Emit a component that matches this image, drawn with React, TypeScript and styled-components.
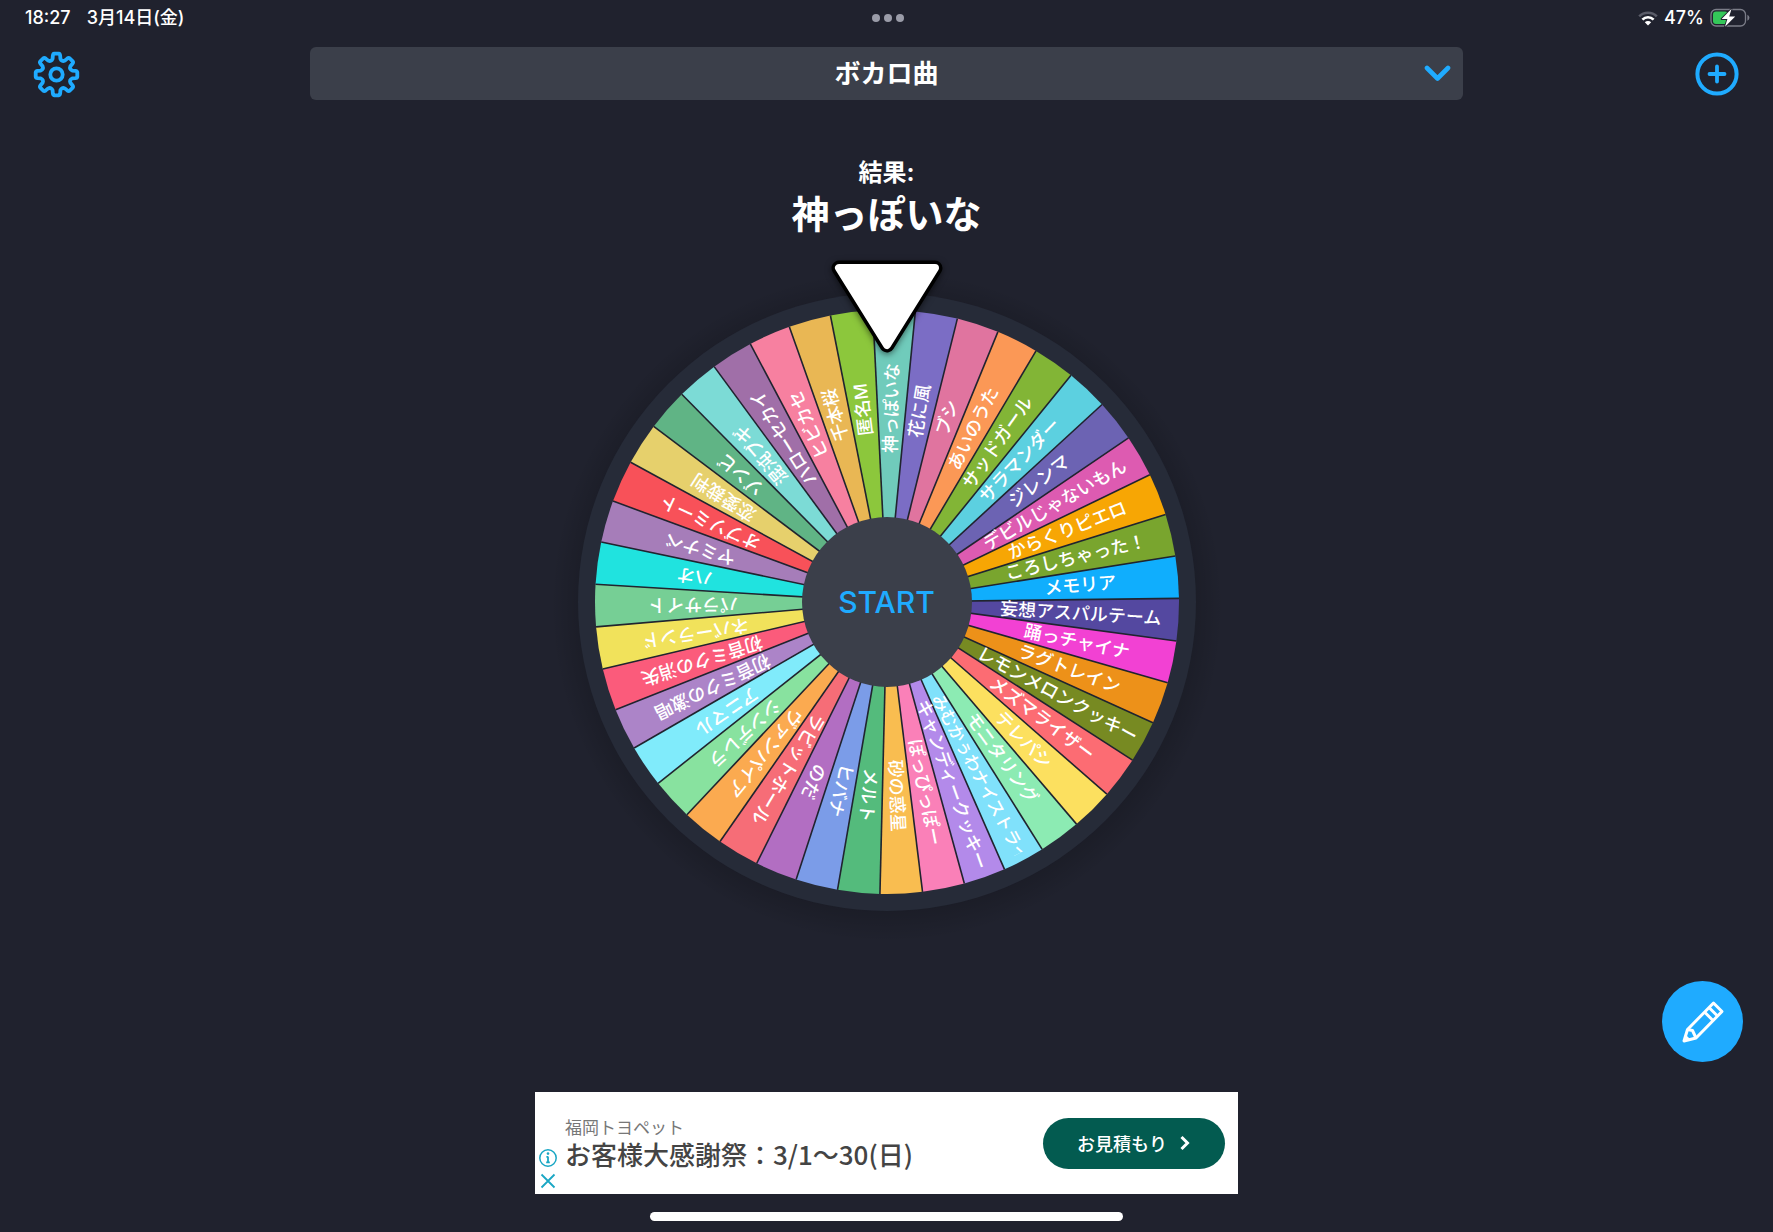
import React, { useState } from 'react';
import styled, { createGlobalStyle } from 'styled-components';

const ACCENT = '#1fabff';
const FONT = `Inter, "Noto Sans CJK JP", sans-serif`;

const GlobalStyle = createGlobalStyle`
  *, *::before, *::after { box-sizing: border-box; }
  body {
    margin: 0;
    background: #20222e;
    color: #fff;
    font-family: ${FONT};
  }
  button, select { font-family: inherit; }
`;

const Screen = styled.div`
  display: flex;
  flex-direction: column;
  min-height: 100vh;
  overflow: hidden;
`;

const StatusBar = styled.header`
  display: grid;
  grid-template-columns: 1fr auto 1fr;
  align-items: center;
  height: 36px;
  padding: 0 23px 0 25px;
  font-size: 18px;
  font-weight: 500;
  line-height: 20px;
`;

const StatusGroup = styled.div<{ $end?: boolean; $gap: number }>`
  display: flex;
  align-items: center;
  justify-content: ${(p) => (p.$end ? 'flex-end' : 'flex-start')};
  gap: ${(p) => p.$gap}px;
`;

const Dots = styled.div`
  display: flex;
  gap: 4px;
`;

const Dot = styled.span`
  width: 8px;
  height: 8px;
  border-radius: 50%;
  background: #9a9ca8;
`;

const TopBar = styled.nav`
  display: grid;
  grid-template-columns: 1fr 65% 1fr;
  align-items: center;
  margin-top: 11px;
`;

const IconButton = styled.button<{ $end?: boolean }>`
  display: flex;
  justify-self: ${(p) => (p.$end ? 'end' : 'start')};
  margin: 0 32px;
  padding: 0;
  border: 0;
  background: none;
  color: ${ACCENT};
  cursor: pointer;
`;

const ListPicker = styled.div`
  position: relative;
  display: flex;
`;

const ListSelect = styled.select`
  width: 100%;
  height: 53px;
  padding: 0 40px;
  border: 0;
  border-radius: 6px;
  appearance: none;
  background: #3b3f4a;
  color: #fff;
  font-size: 26px;
  font-weight: 700;
  text-align: center;
  text-align-last: center;
`;

const PickerArrow = styled.svg`
  position: absolute;
  top: 18px;
  right: 12px;
  pointer-events: none;
`;

const Result = styled.section`
  display: flex;
  flex-direction: column;
  align-items: center;
  margin-top: 56px;
  text-align: center;
`;

const ResultLabel = styled.p`
  margin: 0;
  font-size: 24px;
  font-weight: 700;
  line-height: 33px;
`;

const ResultValue = styled.h1`
  margin: 0;
  font-size: 38px;
  font-weight: 700;
  line-height: 50px;
`;

const WheelArea = styled.main`
  display: grid;
  justify-items: center;
  align-items: center;
  margin-top: 15px;

  > * { grid-area: 1 / 1; }
`;

const StartButton = styled.button`
  width: 170px;
  height: 170px;
  padding: 0;
  border: 0;
  border-radius: 50%;
  background: #3b3f4a;
  color: ${ACCENT};
  font-size: 30px;
  font-weight: 500;
  cursor: pointer;
`;

const Pointer = styled.svg`
  align-self: start;
  filter: drop-shadow(0 2px 3px rgba(0, 0, 0, 0.5));
`;

const SliceLabel = styled.text<{ $size: number }>`
  fill: #fff;
  font-family: ${FONT};
  font-size: ${(p) => p.$size}px;
  font-weight: 500;
`;

const EditButton = styled.button`
  position: fixed;
  right: 30px;
  bottom: 170px;
  display: flex;
  align-items: center;
  justify-content: center;
  width: 81px;
  height: 81px;
  padding: 0;
  border: 0;
  border-radius: 50%;
  background: ${ACCENT};
  color: #fff;
  cursor: pointer;
`;

const Bottom = styled.footer`
  display: flex;
  flex-direction: column;
  align-items: center;
  gap: 18px;
  margin-top: auto;
  padding-bottom: 11px;
`;

const AdBanner = styled.aside`
  display: flex;
  align-items: center;
  width: 703px;
  max-width: 100%;
  height: 102px;
  padding: 0 13px 0 3px;
  background: #fff;
`;

const AdMarks = styled.div`
  display: flex;
  flex-direction: column;
  align-self: flex-end;
  align-items: center;
  gap: 4px;
  width: 20px;
  margin-right: 7px;
  padding-bottom: 4px;
`;

const MarkButton = styled.button`
  display: flex;
  padding: 0;
  border: 0;
  background: none;
  color: #1aa7c4;
  cursor: pointer;
`;

const AdCopy = styled.div`
  flex: 1;
  min-width: 0;
  padding-bottom: 2px;
`;

const Advertiser = styled.p`
  margin: 0;
  color: #777;
  font-family: "Noto Sans CJK JP", sans-serif;
  font-size: 17px;
  line-height: 24px;
`;

const AdTitle = styled.p`
  margin: 0;
  color: #444;
  font-family: "Noto Sans CJK JP", sans-serif;
  font-size: 26px;
  font-weight: 500;
  line-height: 30px;
`;

const AdLink = styled.a`
  display: flex;
  align-items: center;
  justify-content: center;
  gap: 12px;
  width: 182px;
  height: 51px;
  border-radius: 26px;
  background: #035b50;
  color: #fff;
  font-family: "Noto Sans CJK JP", sans-serif;
  font-size: 18px;
  font-weight: 500;
  line-height: 26px;
  text-decoration: none;
`;

const HomeIndicator = styled.div`
  width: 473px;
  max-width: 60%;
  height: 9px;
  border-radius: 5px;
  background: #fff;
`;

const SLICES: [string, string][] = [
  ['神っぽいな', '#70cbbb'],
  ['花に風', '#7b6dc5'],
  ['ブシ', '#e0749f'],
  ['あいのうた', '#fb9856'],
  ['サッドガール', '#82b536'],
  ['サラマンダー', '#5cd0e0'],
  ['ジレンマ', '#6c63b3'],
  ['デビルじゃないもん', '#dd5bb1'],
  ['からくりピエロ', '#f7a604'],
  ['ころしちゃった！', '#79a52e'],
  ['メモリア', '#10aefd'],
  ['妄想アスパルテーム', '#5448a0'],
  ['踊っチャイナ', '#f241d3'],
  ['ラグトレイン', '#ed9119'],
  ['レモンメロンクッキー', '#778a22'],
  ['メズマライザー', '#fc6c73'],
  ['テレパシ', '#fce05f'],
  ['モニタリング', '#8cebb3'],
  ['みむかぅわナイストライ', '#80e1fb'],
  ['キャンディークッキー', '#b38aea'],
  ['ぽっぴっぽー', '#fa80b8'],
  ['砂の惑星', '#f9bd50'],
  ['メルト', '#54bb7c'],
  ['ヒバナ', '#7b9ce8'],
  ['のだ', '#b26ec2'],
  ['ラビットホール', '#f66d77'],
  ['ヴァンパイア', '#fbaa50'],
  ['シンデレラ', '#88e29f'],
  ['アニマル', '#80ebfb'],
  ['初音ミクの激唱', '#ac84c8'],
  ['初音ミクの消失', '#fb5b7b'],
  ['ネバーランド', '#f1e25b'],
  ['パラサイト', '#76cf95'],
  ['ハオ', '#20e3df'],
  ['ヤミナベ', '#a67db9'],
  ['オブソミート', '#f85159'],
  ['恋愛裁判', '#e6d06c'],
  ['ゾンビ', '#60b485'],
  ['混沌ブギ', '#7cdbd6'],
  ['ハローセカイ', '#a06fa8'],
  ['ヒビカセ', '#f780a0'],
  ['千本桜', '#e9b754'],
  ['匿名M', '#8cc73c'],
];

const SIZE = 696;
const C = SIZE / 2;
const R_SLICE = 292;
const R_RIM = 309;
const R_LABEL = 194;
const STEP = 360 / SLICES.length;
const START_ANGLE = -2.8;

const point = (deg: number, r: number) => {
  const a = ((deg - 90) * Math.PI) / 180;
  return `${(C + r * Math.cos(a)).toFixed(2)} ${(C + r * Math.sin(a)).toFixed(2)}`;
};

function Wheel() {
  return (
    <svg width={SIZE} height={SIZE} viewBox={`0 0 ${SIZE} ${SIZE}`} role="img" aria-label="ルーレット">
      <defs>
        <radialGradient id="halo">
          <stop offset="0.9" stopColor="#000" stopOpacity="0.16" />
          <stop offset="1" stopColor="#000" stopOpacity="0" />
        </radialGradient>
        <clipPath id="labelArea">
          <rect x="0" y="-20" width="284" height="40" />
        </clipPath>
      </defs>
      <circle cx={C} cy={C + 4} r="336" fill="url(#halo)" />
      <circle cx={C} cy={C} r={R_RIM} fill="#262b38" />
      {SLICES.map(([name, color], i) => {
        const a = START_ANGLE + i * STEP;
        return (
          <path
            key={name}
            d={`M${C} ${C}L${point(a, R_SLICE)}A${R_SLICE} ${R_SLICE} 0 0 1 ${point(a + STEP, R_SLICE)}Z`}
            fill={color}
          />
        );
      })}
      {SLICES.map(([name], i) => (
        <path key={name} d={`M${C} ${C}L${point(START_ANGLE + i * STEP, R_SLICE)}`} stroke="#20242f" strokeWidth="1.6" />
      ))}
      {SLICES.map(([name], i) => {
        const long = name.length > 10;
        return (
          <g
            key={name}
            transform={`translate(${C} ${C}) rotate(${START_ANGLE + (i + 0.5) * STEP - 90})`}
            clipPath="url(#labelArea)"
          >
            <SliceLabel $size={long ? 17 : 18} x={long ? 106 : R_LABEL} y="6" textAnchor={long ? 'start' : 'middle'}>
              {name}
            </SliceLabel>
          </g>
        );
      })}
    </svg>
  );
}

function GearIcon() {
  const parts: string[] = [];
  const p = (deg: number, r: number) => {
    const a = (deg * Math.PI) / 180;
    return `${(24.5 + r * Math.sin(a)).toFixed(2)} ${(24.5 - r * Math.cos(a)).toFixed(2)}`;
  };
  for (let i = 0; i < 8; i++) {
    const a = i * 45;
    parts.push(
      `${i ? 'L' : 'M'}${p(a - 14, 16.2)}L${p(a - 11, 19.2)}Q${p(a - 9.5, 20.9)} ${p(a - 6, 20.9)}L${p(a + 6, 20.9)}Q${p(a + 9.5, 20.9)} ${p(a + 11, 19.2)}L${p(a + 14, 16.2)}Q${p(a + 22.5, 13.6)} ${p(a + 31, 16.2)}`,
    );
  }
  return (
    <svg width="48" height="48" viewBox="0 0 48 48" fill="none" stroke="currentColor" strokeWidth="3.8" strokeLinejoin="round" aria-hidden="true">
      <path d={`${parts.join('')}Z`} />
      <circle cx="24.5" cy="24.5" r="6.2" />
    </svg>
  );
}

function PlusIcon() {
  return (
    <svg width="48" height="48" viewBox="0 0 48 48" fill="none" stroke="currentColor" strokeWidth="4" strokeLinecap="round" aria-hidden="true">
      <circle cx="24" cy="24" r="19.6" />
      <path d="M24 16.5V31.5M16.5 24H31.5" strokeWidth="3.8" />
    </svg>
  );
}

function PencilIcon() {
  return (
    <svg width="44" height="44" viewBox="0 0 44 44" fill="none" stroke="currentColor" strokeWidth="3" strokeLinejoin="round" aria-hidden="true">
      <path d="M3 41L6.5 29.5L32.5 3L41 11.5L15 38Z" />
      <path d="M6.5 29.5L11.5 30.5L15 38M23.5 12L32 20.5M28 7.5L36.5 16" />
      <path d="M3 41L9 39L5 35Z" fill="currentColor" stroke="none" />
    </svg>
  );
}

function WifiIcon() {
  return (
    <svg width="20" height="15" viewBox="0 0 20 15" fill="none" strokeWidth="2.6" aria-hidden="true">
      <path d="M1.2 5.4A12.4 12.4 0 0 1 18.8 5.4" stroke="#5a5c68" />
      <path d="M4.4 8.6A7.9 7.9 0 0 1 15.6 8.6" stroke="#fff" />
      <path d="M10 14.6L6.8 11.3A4.6 4.6 0 0 1 13.2 11.3Z" fill="#fff" />
    </svg>
  );
}

function BatteryIcon() {
  return (
    <svg width="40" height="20" viewBox="0 0 40 20" aria-hidden="true">
      <rect x="1" y="1.5" width="34.5" height="16.5" rx="5" fill="none" stroke="#7b7d88" strokeWidth="1.3" />
      <rect x="3" y="3.5" width="15" height="12.5" rx="3" fill="#34c759" />
      <path d="M37.4 6.8Q39.4 7.6 39.4 9.8T37.4 12.8Z" fill="#7b7d88" />
      <path d="M21.6 0.8L11.6 11H17.4L15 18.8L25.2 8.4H19.2Z" fill="#fff" stroke="#20222e" strokeWidth="1.8" strokeLinejoin="round" paintOrder="stroke" />
    </svg>
  );
}

export default function App() {
  const [list, setList] = useState('ボカロ曲');
  return (
    <>
      <GlobalStyle />
      <Screen>
        <StatusBar>
          <StatusGroup $gap={16}>
            <span>18:27</span>
            <span>3月14日(金)</span>
          </StatusGroup>
          <Dots>
            <Dot />
            <Dot />
            <Dot />
          </Dots>
          <StatusGroup $gap={6} $end>
            <WifiIcon />
            <span>47%</span>
            <BatteryIcon />
          </StatusGroup>
        </StatusBar>

        <TopBar>
          <IconButton type="button" aria-label="設定">
            <GearIcon />
          </IconButton>
          <ListPicker>
            <ListSelect aria-label="リスト" value={list} onChange={(e) => setList(e.target.value)}>
              <option>ボカロ曲</option>
            </ListSelect>
            <PickerArrow width="27" height="17" viewBox="0 0 27 17" fill="none" aria-hidden="true">
              <path d="M3 3L13.5 13.5L24 3" stroke={ACCENT} strokeWidth="4.6" strokeLinecap="round" strokeLinejoin="round" />
            </PickerArrow>
          </ListPicker>
          <IconButton type="button" aria-label="追加" $end>
            <PlusIcon />
          </IconButton>
        </TopBar>

        <Result>
          <ResultLabel>結果:</ResultLabel>
          <ResultValue>神っぽいな</ResultValue>
        </Result>

        <WheelArea>
          <Wheel />
          <StartButton type="button">START</StartButton>
          <Pointer width="112" height="104" viewBox="0 0 112 104" strokeLinejoin="round" aria-hidden="true">
            <path d="M8 14H104L56 91Z" fill="#000" stroke="#000" strokeWidth="15" />
            <path d="M8 14H104L56 91Z" fill="#fff" stroke="#fff" strokeWidth="8" />
          </Pointer>
        </WheelArea>

        <EditButton type="button" aria-label="編集">
          <PencilIcon />
        </EditButton>

        <Bottom>
          <AdBanner aria-label="広告">
            <AdMarks>
              <MarkButton type="button" aria-label="広告情報">
                <svg width="20" height="20" viewBox="0 0 20 20" fill="none" stroke="currentColor" aria-hidden="true">
                  <circle cx="10" cy="10" r="8.2" strokeWidth="1.5" />
                  <path d="M10 8.4V14.8M8.4 8.9H10M8.2 14.4H11.8" strokeWidth="1.8" />
                  <circle cx="10" cy="5.6" r="1.3" fill="currentColor" stroke="none" />
                </svg>
              </MarkButton>
              <MarkButton type="button" aria-label="閉じる">
                <svg width="18" height="18" viewBox="0 0 18 18" fill="none" stroke="currentColor" aria-hidden="true">
                  <path d="M2.5 2.5L15.5 15.5M15.5 2.5L2.5 15.5" strokeWidth="1.8" />
                </svg>
              </MarkButton>
            </AdMarks>
            <AdCopy>
              <Advertiser>福岡トヨペット</Advertiser>
              <AdTitle>お客様大感謝祭：3/1〜30(日)</AdTitle>
            </AdCopy>
            <AdLink href="#estimate">
              お見積もり
              <svg width="12" height="16" viewBox="0 0 12 16" fill="none" stroke="currentColor" strokeWidth="3" aria-hidden="true">
                <path d="M2.5 2L8.5 8L2.5 14" />
              </svg>
            </AdLink>
          </AdBanner>
          <HomeIndicator />
        </Bottom>
      </Screen>
    </>
  );
}
